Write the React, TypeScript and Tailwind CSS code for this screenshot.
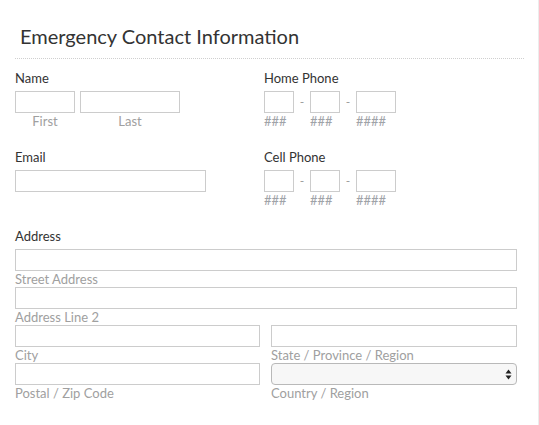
import React from 'react';

const font = { fontFamily: 'Lato, "Open Sans", sans-serif' };

function Box({ className = '' }: { className?: string }) {
  return <div className={`h-[22px] border border-[#cccccc] bg-white ${className}`} />;
}

function PhoneField({ label }: { label: string }) {
  return (
    <div>
      <div className="text-[13px] leading-[16px] text-[#333]">{label}</div>
      <div className="mt-[5px] flex items-start">
        <div className="flex flex-col">
          <Box className="w-[30px]" />
          <span className="text-[13px] leading-[16px] text-[#9fa3a8]">###</span>
        </div>
        <span className="w-[16px] text-center text-[12px] leading-[22px] text-[#999]">-</span>
        <div className="flex flex-col">
          <Box className="w-[30px]" />
          <span className="text-[13px] leading-[16px] text-[#9fa3a8]">###</span>
        </div>
        <span className="w-[16px] text-center text-[12px] leading-[22px] text-[#999]">-</span>
        <div className="flex flex-col">
          <Box className="w-[40px]" />
          <span className="text-[13px] leading-[16px] text-[#9fa3a8]">####</span>
        </div>
      </div>
    </div>
  );
}

function Sub({ children }: { children: React.ReactNode }) {
  return <div className="text-[13px] leading-[16px] text-[#a0a0a0]">{children}</div>;
}

export default function App() {
  return (
    <div className="w-[539px] min-h-[425px] bg-white border-r border-[#ececec]" style={font}>
      <div className="ml-[15px] w-[509px] pt-[24px] pb-[10px] border-b border-dotted border-[#cfcfcf]">
        <h1 className="pl-[5px] text-[20px] leading-[24px] text-[#333]">Emergency Contact Information</h1>
      </div>

      <div className="pl-[15px] pr-[21px] pt-[11px]">
        <div className="grid grid-cols-[249px_1fr]">
          <div>
            <div className="text-[13px] leading-[16px] text-[#333]">Name</div>
            <div className="mt-[5px] flex gap-[5px]">
              <div className="flex flex-col items-center">
                <Box className="w-[60px]" />
                <Sub>First</Sub>
              </div>
              <div className="flex flex-col items-center">
                <Box className="w-[100px]" />
                <Sub>Last</Sub>
              </div>
            </div>
          </div>
          <PhoneField label="Home Phone" />
        </div>

        <div className="mt-[20px] grid grid-cols-[249px_1fr]">
          <div>
            <div className="text-[13px] leading-[16px] text-[#333]">Email</div>
            <Box className="mt-[5px] w-[191px]" />
          </div>
          <PhoneField label="Cell Phone" />
        </div>

        <div className="mt-[20px]">
          <div className="text-[13px] leading-[16px] text-[#333]">Address</div>
          <Box className="mt-[5px] w-full" />
          <Sub>Street Address</Sub>
          <Box className="w-full" />
          <Sub>Address Line 2</Sub>
          <div className="grid grid-cols-[245px_1fr] gap-x-[11px]">
            <div>
              <Box className="w-full" />
              <Sub>City</Sub>
            </div>
            <div>
              <Box className="w-full" />
              <Sub>State / Province / Region</Sub>
            </div>
            <div>
              <Box className="w-full" />
              <Sub>Postal / Zip Code</Sub>
            </div>
            <div>
              <div className="flex h-[22px] items-center justify-end rounded-[4px] border border-[#b9b9b9] bg-[#f7f7f7] pr-[4px]">
                <svg width="7" height="11" viewBox="0 0 7 11">
                  <path d="M3.5 0.5 L6.5 4.5 L0.5 4.5 Z" fill="#222" />
                  <path d="M3.5 10.5 L6.5 6.5 L0.5 6.5 Z" fill="#222" />
                </svg>
              </div>
              <Sub>Country / Region</Sub>
            </div>
          </div>
        </div>
      </div>
    </div>
  );
}
